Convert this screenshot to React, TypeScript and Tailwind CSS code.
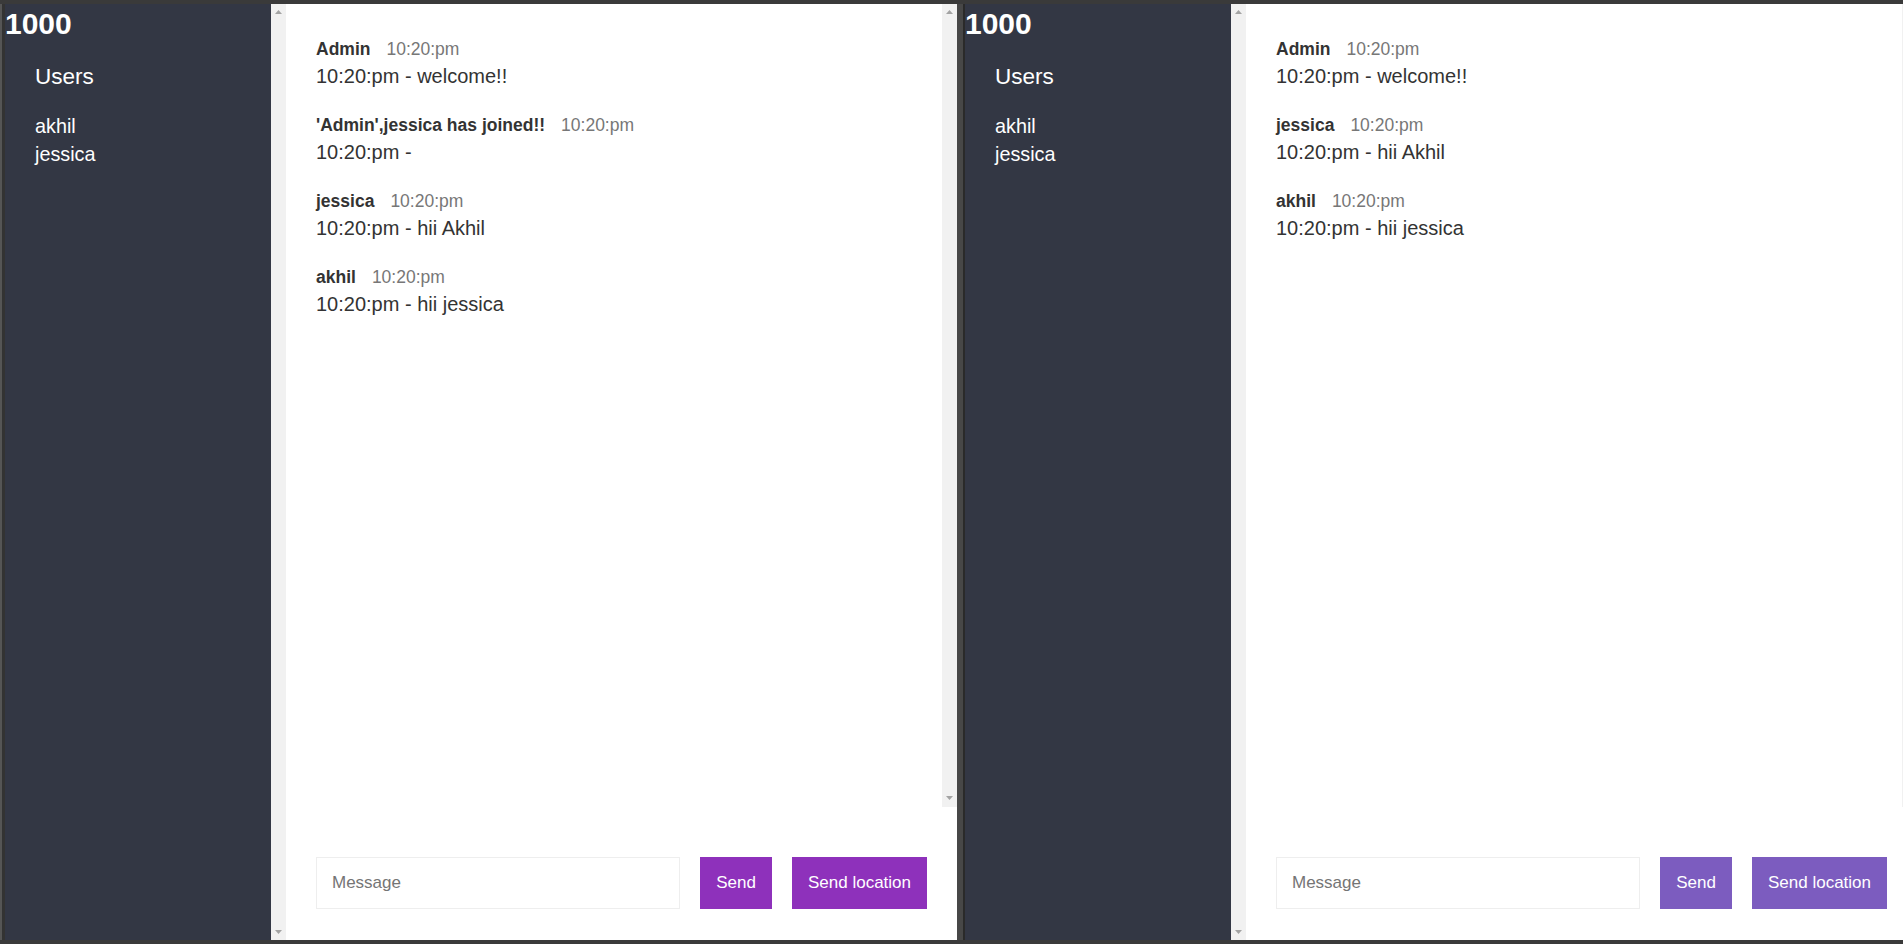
type Msg = { name: string; time: string; text: string };

const leftMessages: Msg[] = [
  { name: "Admin", time: "10:20:pm", text: "10:20:pm - welcome!!" },
  { name: "'Admin',jessica has joined!!", time: "10:20:pm", text: "10:20:pm -" },
  { name: "jessica", time: "10:20:pm", text: "10:20:pm - hii Akhil" },
  { name: "akhil", time: "10:20:pm", text: "10:20:pm - hii jessica" },
];

const rightMessages: Msg[] = [
  { name: "Admin", time: "10:20:pm", text: "10:20:pm - welcome!!" },
  { name: "jessica", time: "10:20:pm", text: "10:20:pm - hii Akhil" },
  { name: "akhil", time: "10:20:pm", text: "10:20:pm - hii jessica" },
];

function Arrow({ down }: { down?: boolean }) {
  return (
    <svg width="7" height="4" viewBox="0 0 7 4" className="mx-auto block">
      <path d={down ? "M0 0H7L3.5 4Z" : "M3.5 0L7 4H0Z"} fill="#a3a3a3" />
    </svg>
  );
}

function Scrollbar({ bottom }: { bottom: string }) {
  return (
    <div className={`flex w-[15px] shrink-0 flex-col justify-between bg-[#f1f1f1] pt-[6px] ${bottom}`}>
      <Arrow />
      <Arrow down />
    </div>
  );
}

function ChatWindow({ messages, buttonClass }: { messages: Msg[]; buttonClass: string }) {
  return (
    <div className="flex h-full w-[952px] shrink-0">
      {/* sidebar */}
      <aside className="w-[266px] shrink-0 bg-[#333744] text-white">
        <h2 className="mt-[3px] text-[30px] font-bold leading-[34px]">1000</h2>
        <h3 className="mt-[23px] px-[30px] text-[22.5px] leading-[26px]">Users</h3>
        <ul className="mt-[22px] px-[30px] text-[19.8px] leading-[28px]">
          <li>akhil</li>
          <li>jessica</li>
        </ul>
      </aside>
      <Scrollbar bottom="pb-[6px]" />

      {/* main */}
      <main className="flex w-[671px] shrink-0 flex-col bg-white">
        <div className="flex min-h-0 flex-1">
          <div className="flex-1 pl-[30px] pt-[35px]">
            {messages.map((m, i) => (
              <div key={i} className="mb-[27px]">
                <p className="flex items-baseline gap-[16px] text-[17.5px] leading-[20px]">
                  <span className="font-bold text-[#333]">{m.name}</span>
                  <span className="text-[#777]">{m.time}</span>
                </p>
                <p className="mt-[5px] text-[20px] leading-[24px] text-[#333]">{m.text}</p>
              </div>
            ))}
          </div>
          <Scrollbar bottom="pb-[7px]" />
        </div>

        <div className="flex shrink-0 gap-[20px] px-[30px] pb-[31px] pt-[50px]">
          <input
            placeholder="Message"
            className="h-[52px] min-w-0 flex-1 border border-[#eeeeee] px-[15px] text-[17px] text-[#333] outline-none placeholder:text-[#757575]"
          />
          <button className={`h-[52px] px-[16px] text-[17px] text-white ${buttonClass}`}>Send</button>
          <button className={`h-[52px] px-[16px] text-[17px] text-white ${buttonClass}`}>Send location</button>
        </div>
      </main>
    </div>
  );
}

export default function App() {
  return (
    <div className="flex h-screen w-full overflow-hidden bg-[#3a3a3a] py-[4px] font-['Liberation_Sans',Arial,sans-serif]">
      <div className="flex w-[5px] shrink-0">
        <div className="w-[2px] bg-[#555]"></div>
        <div className="w-[3px] bg-[#333]"></div>
      </div>
      <ChatWindow messages={leftMessages} buttonClass="bg-[#8e31bb]" />
      <div className="flex w-[8px] shrink-0">
        <div className="w-[6px] bg-[#474747]"></div>
        <div className="w-[2px] bg-[#2a2a2a]"></div>
      </div>
      <ChatWindow messages={rightMessages} buttonClass="bg-[#7c5cbf]" />
    </div>
  );
}
